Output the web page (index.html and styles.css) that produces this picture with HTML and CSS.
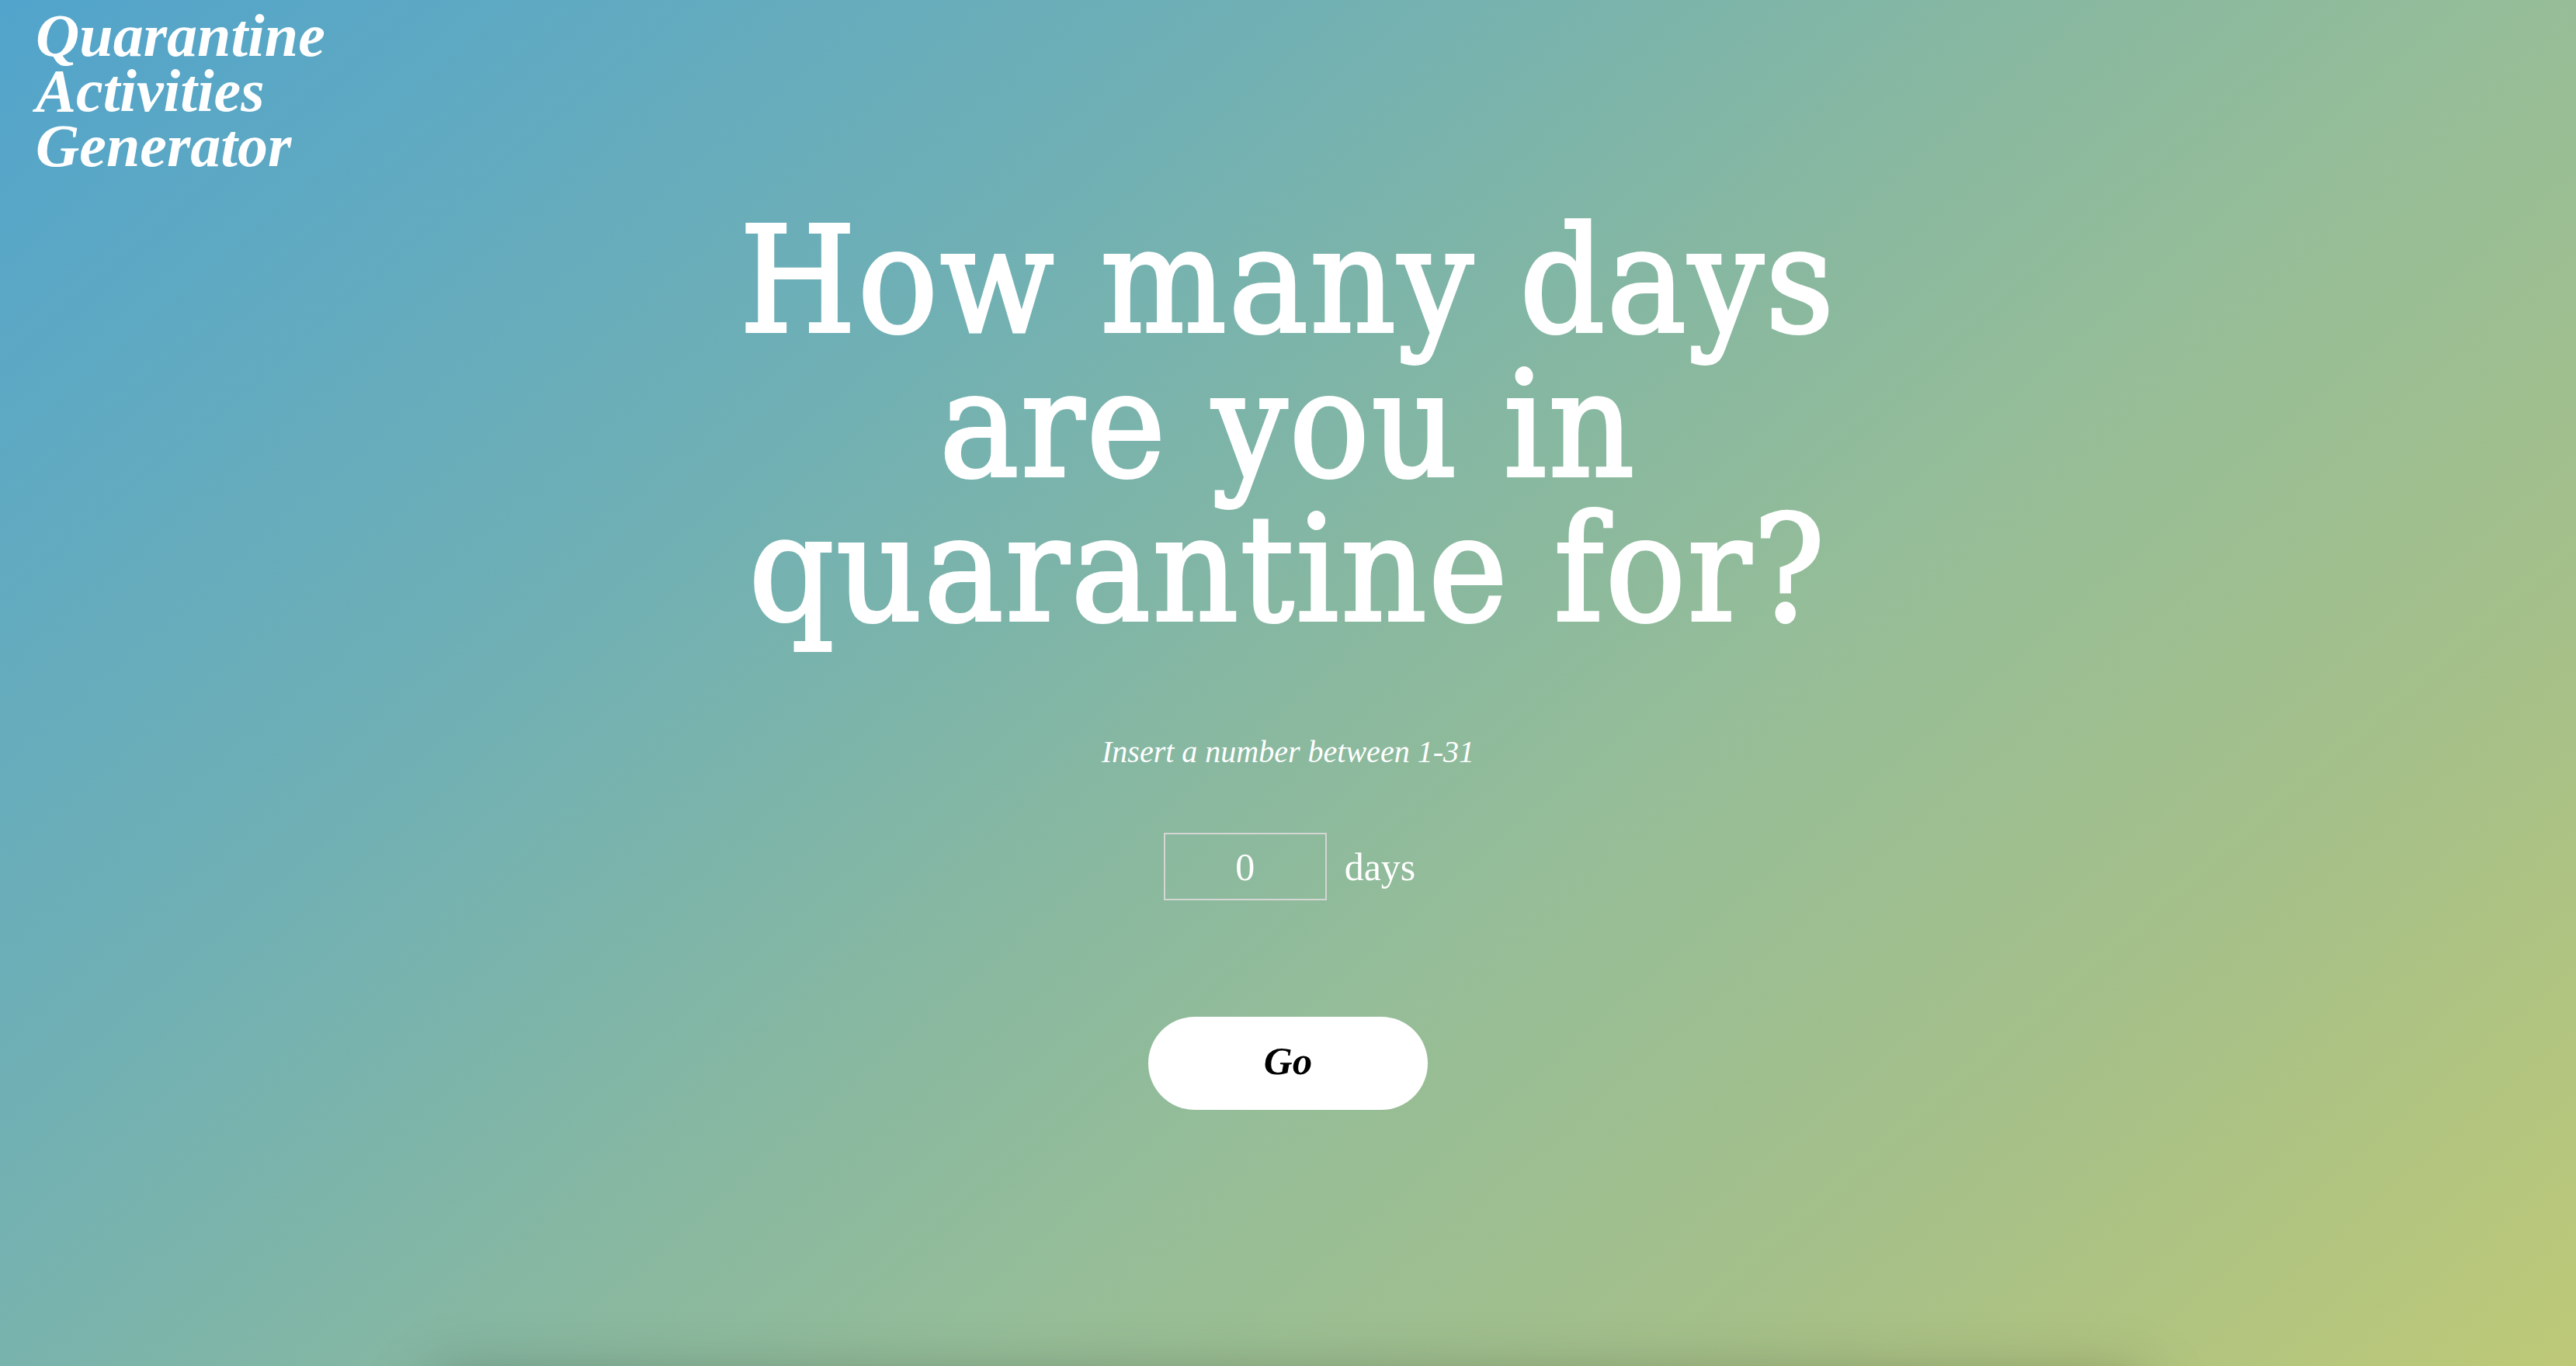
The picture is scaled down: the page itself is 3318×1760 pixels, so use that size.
FILE: index.html
```html
<!DOCTYPE html>
<html lang="en">
<head>
<meta charset="utf-8">
<title>Quarantine Activities Generator</title>
<link rel="stylesheet" href="styles.css">
</head>
<body>
<div class="page">
  <header class="site-header">
    <div class="logo">Quarantine<br>Activities<br>Generator</div>
  </header>
  <main class="hero">
    <h1 class="question">How many days are you in quarantine for?</h1>
    <p class="hint">Insert a number between 1-31</p>
    <div class="day-row">
      <input class="day-input" type="text" value="0" aria-label="days">
      <span class="day-label">days</span>
    </div>
    <button class="go-btn" type="button">Go</button>
  </main>
  <section class="results"></section>
</div>
</body>
</html>
```

FILE: styles.css
```css
html, body {
  margin: 0;
  padding: 0;
}

body {
  font-family: "Liberation Serif", "Times New Roman", serif;
  color: #ffffff;
}

.page {
  height: 100vh;
  overflow: hidden;
  display: flex;
  flex-direction: column;
  background: linear-gradient(139deg, #52a4cc 0%, #70b0b4 31%, #88b8a0 50%, #95bd98 61%, #a6c088 80%, #bdc977 100%);
}

.site-header {
  padding: 10px 0 0 46px;
}

.logo {
  font-size: 78px;
  line-height: 71px;
  font-weight: 700;
  font-style: italic;
  color: #ffffff;
}

.hero {
  display: flex;
  flex-direction: column;
  align-items: center;
}

.question {
  margin: 46px 0 0;
  max-width: 1560px;
  font-family: "DejaVu Serif", "Liberation Serif", serif;
  font-stretch: condensed;
  font-size: 190px;
  line-height: 186px;
  letter-spacing: 3px;
  font-weight: 400;
  text-align: center;
  color: #ffffff;
  -webkit-text-stroke: 4px #ffffff;
}

.hint {
  margin: 118px 0 0;
  font-size: 40px;
  line-height: 48px;
  font-style: italic;
}

.day-row {
  margin-top: 80px;
  display: flex;
  align-items: center;
  gap: 23px;
  padding-left: 4px;
}

.day-input {
  box-sizing: border-box;
  width: 210px;
  height: 87px;
  border: 2px solid #d3d6d2;
  background: transparent;
  color: #ffffff;
  text-align: center;
  font-family: "Liberation Serif", "Times New Roman", serif;
  font-size: 50px;
  padding: 0;
  outline: none;
}

.day-label {
  font-size: 50px;
  line-height: 50px;
}

.go-btn {
  margin-top: 150px;
  width: 360px;
  height: 120px;
  padding: 0 0 6px;
  border: none;
  border-radius: 60px;
  background: #ffffff;
  color: #000000;
  font-family: "Liberation Serif", "Times New Roman", serif;
  font-size: 51px;
  font-weight: 700;
  font-style: italic;
  cursor: pointer;
}

.results {
  flex: none;
  margin: 358px auto 0;
  width: 2200px;
  height: 600px;
  box-shadow: 0 0 80px 0 rgba(0, 0, 0, 0.35);
}
```
